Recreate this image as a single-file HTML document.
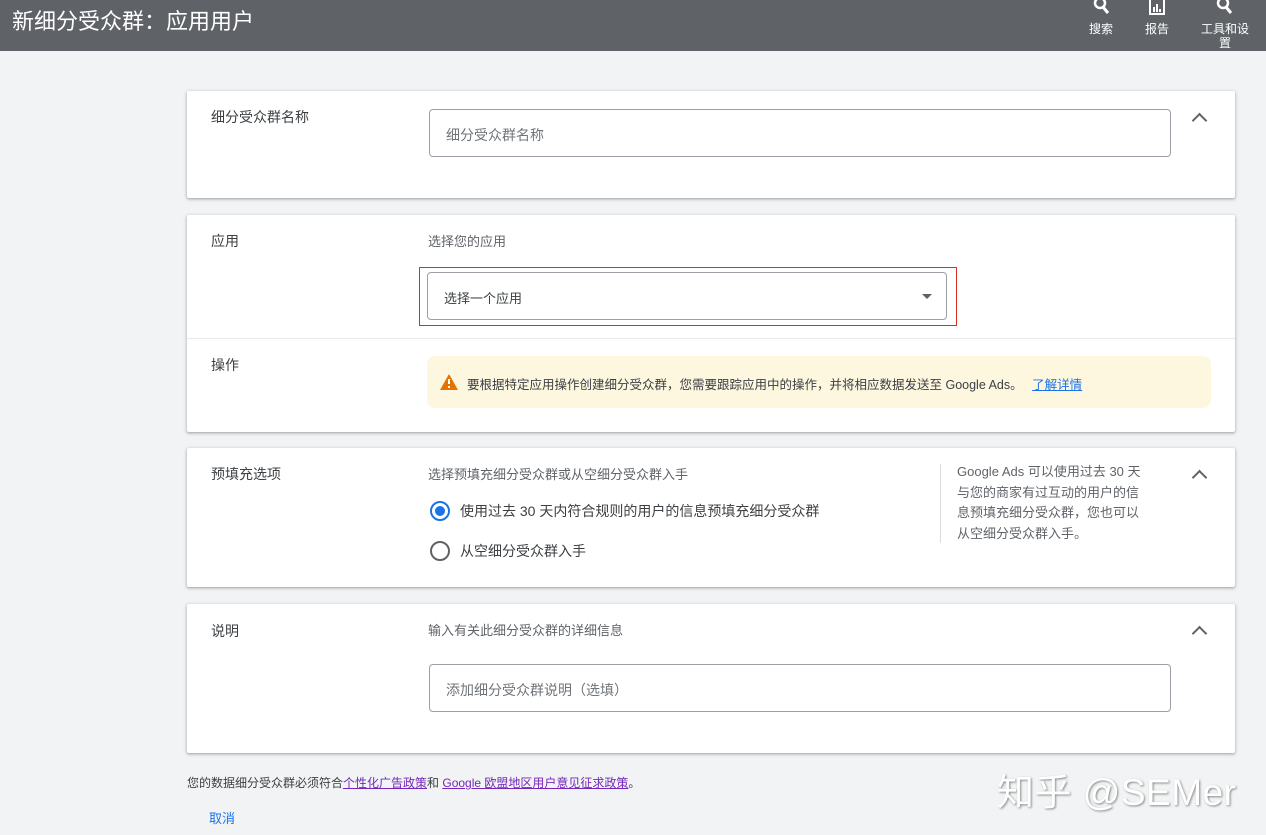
<!DOCTYPE html>
<html><head><meta charset="utf-8"><style>
*{box-sizing:border-box;margin:0;padding:0}
body{width:1266px;height:835px;overflow:hidden;background:#f1f3f4;font-family:"Liberation Sans","Noto Sans CJK SC",sans-serif;color:#3c4043;position:relative}
.top{position:absolute;left:0;top:0;width:1266px;height:51px;background:#5f6368;color:#fff}
.top h1{position:absolute;left:12px;top:4px;font-size:22px;font-weight:normal}
.nav{position:absolute;top:0;font-size:12px;text-align:center;color:#fff;line-height:14px}
.card{position:absolute;left:187px;width:1048px;background:#fff;box-shadow:0 1px 2px rgba(60,64,67,.3),0 1px 3px 1px rgba(60,64,67,.15);border-radius:2px}
.abs{position:absolute}
.lbl{font-size:14px;color:#3c4043}
.sub{font-size:13px;color:#5f6368}
.input{position:absolute;border:1px solid #9aa0a6;border-radius:4px;height:48px;font-size:14px;color:#70757a;padding:15px 16px}
.chev{position:absolute;width:11px;height:11px;border-left:2px solid #5f6368;border-top:2px solid #5f6368;transform:rotate(45deg)}
.radio{position:absolute;width:20px;height:20px;border-radius:50%;border:2px solid #5f6368}
a{color:#1a73e8}
</style></head><body>
<div class="top"><h1>新细分受众群：应用用户</h1>
<div class="nav" style="left:1088px;width:26px"><svg width="20" height="16" viewBox="0 0 20 16"><circle cx="9" cy="3" r="5" stroke="#fff" stroke-width="2.5" fill="none"/><path d="M12 7 L17 13" stroke="#fff" stroke-width="3"/></svg><div style="margin-top:3px">搜索</div></div>
<div class="nav" style="left:1144px;width:26px"><svg width="20" height="16" viewBox="0 0 20 16"><path d="M3 0V14H17V0" stroke="#fff" stroke-width="2" fill="none"/><path d="M7 12V7M10 12V4M13 12V9" stroke="#fff" stroke-width="2"/></svg><div style="margin-top:3px">报告</div></div>
<div class="nav" style="left:1198px;width:54px"><svg width="20" height="16" viewBox="0 0 20 16"><circle cx="8" cy="3" r="5" stroke="#fff" stroke-width="2.5" fill="none"/><path d="M11 7 L16 13" stroke="#fff" stroke-width="3"/></svg><div style="margin-top:3px">工具和设<br>置</div></div>
</div>

<div class="card" style="top:91px;height:107px">
<div class="abs lbl" style="left:24px;top:16px">细分受众群名称</div>
<div class="input" style="left:242px;top:18px;width:742px">细分受众群名称</div>
<div class="chev" style="left:1007px;top:24px"></div>
</div>

<div class="card" style="top:215px;height:217px">
<div class="abs lbl" style="left:24px;top:16px">应用</div>
<div class="abs sub" style="left:241px;top:16px">选择您的应用</div>
<div class="abs" style="left:232px;top:52px;width:538px;height:59px;border:1px solid #d93025"></div>
<div class="input" style="left:240px;top:57px;width:520px;color:#3c4043;height:48px;font-size:13px;padding-top:15px">选择一个应用
<div class="abs" style="right:14px;top:21px;border-left:5px solid transparent;border-right:5px solid transparent;border-top:5px solid #5f6368"></div></div>
<div class="abs" style="left:0;top:123px;width:1048px;border-top:1px solid #e8eaed"></div>
<div class="abs lbl" style="left:24px;top:140px">操作</div>
<div class="abs" style="left:240px;top:141px;width:784px;height:52px;background:#fef7e0;border-radius:8px;font-size:12.5px;color:#3c4043;padding:18px 0 0 40px">
<svg class="abs" style="left:13px;top:18px" width="18" height="16" viewBox="0 0 18 16"><path d="M9 0L18 16H0Z" fill="#e37400"/><path d="M9 5V10M9 12V14" stroke="#fff" stroke-width="2"/></svg>
要根据特定应用操作创建细分受众群，您需要跟踪应用中的操作，并将相应数据发送至 Google Ads。 <a href="#" style="text-decoration:underline;margin-left:6px">了解详情</a></div>
</div>

<div class="card" style="top:448px;height:139px">
<div class="abs lbl" style="left:24px;top:16px">预填充选项</div>
<div class="abs sub" style="left:241px;top:16px">选择预填充细分受众群或从空细分受众群入手</div>
<div class="radio" style="left:243px;top:53px;border-color:#1a73e8"><div style="position:absolute;left:3px;top:3px;width:10px;height:10px;border-radius:50%;background:#1a73e8"></div></div>
<div class="abs lbl" style="left:273px;top:53px">使用过去 30 天内符合规则的用户的信息预填充细分受众群</div>
<div class="radio" style="left:243px;top:93px"></div>
<div class="abs lbl" style="left:273px;top:93px">从空细分受众群入手</div>
<div class="abs" style="left:753px;top:16px;height:79px;border-left:1px solid #dadce0"></div>
<div class="abs sub" style="left:770px;top:14px;white-space:nowrap;line-height:20.5px">Google Ads 可以使用过去 30 天<br>与您的商家有过互动的用户的信<br>息预填充细分受众群，您也可以<br>从空细分受众群入手。</div>
<div class="chev" style="left:1007px;top:24px"></div>
</div>

<div class="card" style="top:604px;height:149px">
<div class="abs lbl" style="left:24px;top:17px">说明</div>
<div class="abs sub" style="left:241px;top:16px">输入有关此细分受众群的详细信息</div>
<div class="input" style="left:242px;top:60px;width:742px">添加细分受众群说明（选填）</div>
<div class="chev" style="left:1007px;top:24px"></div>
</div>

<div class="abs" style="left:187px;top:774px;font-size:12px;color:#3c4043">您的数据细分受众群必须符合<a href="#" style="color:#7627bb">个性化广告政策</a>和 <a href="#" style="color:#7627bb">Google 欧盟地区用户意见征求政策</a>。</div>
<div class="abs" style="left:209px;top:808px;font-size:13px;color:#1a73e8">取消</div>
<div class="abs" style="left:997px;top:762px;font-size:37px;color:#fff;text-shadow:1px 1px 2px #888;letter-spacing:0.5px">知乎 @SEMer</div>
</body></html>
